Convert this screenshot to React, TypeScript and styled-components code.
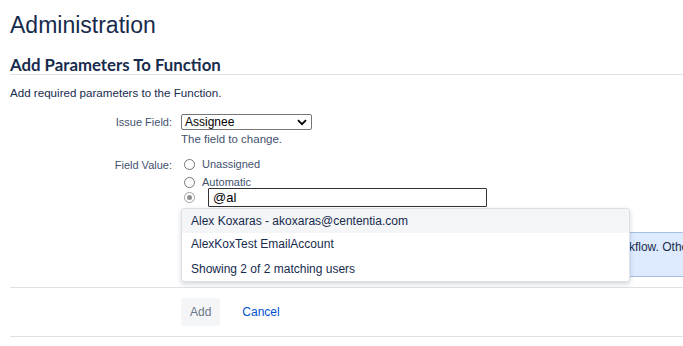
import styled, { createGlobalStyle } from 'styled-components'

const GlobalStyle = createGlobalStyle`
  html, body {
    margin: 0;
    padding: 0;
    background: #fff;
    font-family: 'Liberation Sans', Arial, sans-serif;
    color: #172b4d;
  }
`

const Page = styled.div`
  padding: 0 0 0 10px;
  width: 673px;
  height: 346px;
  overflow: hidden;
`

const Title = styled.h1`
  margin: 0;
  padding-top: 11px;
  font-size: 23px;
  line-height: 28px;
  font-weight: 400;
  color: #172b4d;
`

const SectionTitle = styled.h2`
  margin: 16px 0 0;
  padding: 0;
  font-family: Lato, 'Liberation Sans', sans-serif;
  font-size: 16.8px;
  line-height: 19px;
  font-weight: 700;
  color: #172b4d;
  border-bottom: 1px solid #dfe1e6;
`

const Intro = styled.p`
  margin: 11px 0 0;
  font-size: 11.6px;
  line-height: 14px;
  color: #172b4d;
`

const Form = styled.div`
  margin-top: 14px;
`

const FieldRow = styled.div<{ $gap?: number }>`
  display: grid;
  grid-template-columns: 162px 1fr;
  column-gap: 9px;
  margin-top: ${({ $gap }) => $gap ?? 0}px;
`

const Label = styled.label`
  text-align: right;
  font-size: 11px;
  line-height: 15px;
  color: #42526e;
  padding-top: 1px;
`

const ValueColumn = styled.div`
  position: relative;
`

const SelectBox = styled.div`
  display: flex;
  align-items: center;
  justify-content: space-between;
  box-sizing: border-box;
  width: 131px;
  height: 16px;
  padding: 0 4px 0 3px;
  border: 1px solid #767676;
  border-radius: 2px;
  font-size: 12px;
  color: #000;
`

const Hint = styled.div`
  margin-top: 2px;
  font-size: 11.5px;
  line-height: 14px;
  color: #42526e;
`

const Options = styled.div`
  display: flex;
  flex-direction: column;
  gap: 4px;
`

const OptionRow = styled.div<{ $tall?: boolean }>`
  display: flex;
  align-items: center;
  gap: 7px;
  height: ${({ $tall }) => ($tall ? 19 : 14)}px;
  margin-top: ${({ $tall }) => ($tall ? -5 : 0)}px;
  font-size: 11px;
  color: #42526e;
`

const Radio = styled.span<{ $checked?: boolean }>`
  position: relative;
  box-sizing: border-box;
  width: 11px;
  height: 11px;
  margin-left: 3px;
  border-radius: 50%;
  border: 1px solid ${({ $checked }) => ($checked ? '#a0a0a0' : '#767676')};
  background: #fff;
  &::after {
    content: '';
    display: ${({ $checked }) => ($checked ? 'block' : 'none')};
    position: absolute;
    inset: 2px;
    border-radius: 50%;
    background: #8f8f8f;
  }
`

const TextInput = styled.div`
  box-sizing: border-box;
  width: 279px;
  height: 19px;
  margin-left: 6px;
  padding: 1px 4px;
  border: 1px solid #333;
  border-radius: 1px;
  font-size: 13px;
  line-height: 16px;
  color: #000;
`

const InfoBox = styled.div`
  margin-top: 25px;
  box-sizing: border-box;
  height: 45px;
  padding: 6px 8px;
  background: #deebff;
  border: 1px solid #a5c0e6;
  border-right: none;
  font-size: 12px;
  line-height: 16px;
  white-space: nowrap;
  overflow: hidden;
  color: #172b4d;
`

const Suggestions = styled.div`
  position: absolute;
  left: 0;
  top: 51px;
  width: 449px;
  box-sizing: border-box;
  padding-bottom: 1px;
  background: #fff;
  border: 1px solid #dcdfe4;
  border-radius: 3px;
  box-shadow: 0 2px 5px rgba(9, 30, 66, 0.18);
  z-index: 2;
`

const Suggestion = styled.div<{ $active?: boolean; $status?: boolean }>`
  height: ${({ $active }) => ($active ? 24 : 22)}px;
  margin-top: ${({ $status }) => ($status ? 3 : 0)}px;
  padding: 0 9px;
  display: flex;
  align-items: center;
  font-size: 12px;
  color: #172b4d;
  background: ${({ $active }) => ($active ? '#f4f5f7' : 'transparent')};
  border-radius: ${({ $active }) => ($active ? '3px 3px 0 0' : '0')};
`

const Footer = styled.div`
  margin-top: 10px;
  border-top: 1px solid #dfe1e6;
  border-bottom: 1px solid #dfe1e6;
  padding: 10px 0 10px 171px;
  display: flex;
  align-items: center;
  gap: 13px;
`

const Button = styled.button`
  height: 28px;
  padding: 0 9px;
  border: none;
  border-radius: 3px;
  background: #f4f5f7;
  color: #6b778c;
  font-family: inherit;
  font-size: 12px;
`

const LinkButton = styled.a`
  color: #0052cc;
  font-size: 12px;
  padding: 0 9px;
  text-decoration: none;
`

const Chevron = () => (
  <svg width="10" height="7" viewBox="0 0 10 7">
    <path d="M1 1.2 L5 5.2 L9 1.2" fill="none" stroke="#000" strokeWidth="1.8" />
  </svg>
)

export default function App() {
  return (
    <Page>
      <GlobalStyle />
      <Title>Administration</Title>
      <SectionTitle>Add Parameters To Function</SectionTitle>
      <Intro>Add required parameters to the Function.</Intro>
      <Form>
        <FieldRow>
          <Label>Issue Field:</Label>
          <div>
            <SelectBox>
              <span>Assignee</span>
              <Chevron />
            </SelectBox>
            <Hint>The field to change.</Hint>
          </div>
        </FieldRow>
        <FieldRow $gap={11}>
          <Label>Field Value:</Label>
          <ValueColumn>
            <Options>
              <OptionRow>
                <Radio />
                Unassigned
              </OptionRow>
              <OptionRow>
                <Radio />
                Automatic
              </OptionRow>
              <OptionRow $tall>
                <Radio $checked />
                <TextInput>@al</TextInput>
              </OptionRow>
            </Options>
            <InfoBox>
              The assignee will be set to the chosen user when the issue moves through the workflow. Other users
              can still be assigned later.
            </InfoBox>
            <Suggestions>
              <Suggestion $active>Alex Koxaras - akoxaras@cententia.com</Suggestion>
              <Suggestion>AlexKoxTest EmailAccount</Suggestion>
              <Suggestion $status>Showing 2 of 2 matching users</Suggestion>
            </Suggestions>
          </ValueColumn>
        </FieldRow>
        <Footer>
          <Button>Add</Button>
          <LinkButton href="#">Cancel</LinkButton>
        </Footer>
      </Form>
    </Page>
  )
}
